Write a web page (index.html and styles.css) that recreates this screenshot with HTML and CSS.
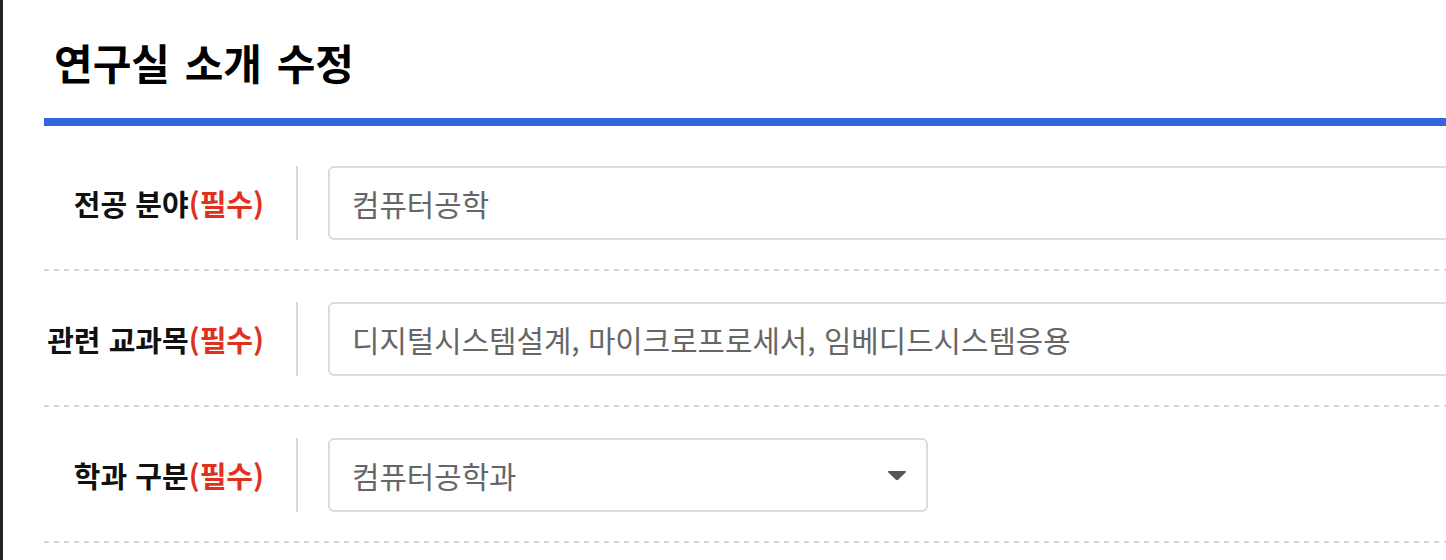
FILE: index.html
```html
<!DOCTYPE html>
<html lang="ko">
<head>
<meta charset="utf-8">
<title>연구실 소개 수정</title>
<link rel="stylesheet" href="styles.css">
</head>
<body>
<div class="side-strip"></div>
<main class="page">
  <header class="page-header">
    <h1 class="page-title">연구실 소개 수정</h1>
  </header>
  <div class="header-bar"></div>
  <form class="form">
    <div class="row">
      <div class="label">전공 분야<span class="req">(필수)</span></div>
      <div class="divider"></div>
      <div class="field">컴퓨터공학</div>
    </div>
    <div class="row">
      <div class="label">관련 교과목<span class="req">(필수)</span></div>
      <div class="divider"></div>
      <div class="field">디지털시스템설계, 마이크로프로세서, 임베디드시스템응용</div>
    </div>
    <div class="row">
      <div class="label">학과 구분<span class="req">(필수)</span></div>
      <div class="divider"></div>
      <div class="field select">
        <span>컴퓨터공학과</span>
        <svg class="caret" width="20" height="11" viewBox="0 0 20 11"><path d="M2 1 H18 Q20 1 18.6 2.6 L11.4 9.6 Q10 11 8.6 9.6 L1.4 2.6 Q0 1 2 1 Z" fill="#555"/></svg>
      </div>
    </div>
  </form>
</main>
</body>
</html>
```
FILE: styles.css
```css
html, body {
  margin: 0;
  padding: 0;
  background: #fff;
}
body {
  display: flex;
  width: 1446px;
  height: 560px;
  overflow: hidden;
  font-family: "Noto Sans CJK KR", "Noto Sans", sans-serif;
}
.side-strip {
  width: 3px;
  flex: none;
  background: #222428;
}
.page {
  flex: none;
  width: 1500px;
  padding-left: 41px;
}
.page-header {
  height: 118px;
  box-sizing: border-box;
  padding-top: 6px;
  display: flex;
  align-items: center;
}
.page-title {
  margin: 0;
  padding-left: 10px;
  font-size: 42px;
  font-weight: 700;
  color: #000;
  word-spacing: 3px;
  line-height: 1;
}
.header-bar {
  height: 8px;
  background: #3366dd;
}
.form {
  padding-top: 9px;
}
.row {
  display: flex;
  align-items: stretch;
  padding: 31px 0;
  background: linear-gradient(to right, #d6d6d6 50%, transparent 50%) left bottom / 10px 2px repeat-x;
}
.label {
  width: 220px;
  padding-right: 32px;
  text-align: right;
  display: flex;
  align-items: center;
  justify-content: flex-end;
  font-size: 29px;
  font-weight: 700;
  color: #111;
  white-space: nowrap;
}
.req {
  color: #e0301e;
}
.divider {
  width: 2px;
  background: #d9d9d9;
  margin-right: 30px;
}
.field {
  flex: 1;
  height: 74px;
  box-sizing: border-box;
  border: 2px solid #dcdcdc;
  border-radius: 6px;
  padding: 0 22px;
  display: flex;
  align-items: center;
  font-size: 29.8px;
  color: #666;
  white-space: nowrap;
}
.field.select {
  flex: none;
  width: 600px;
  justify-content: space-between;
  padding-right: 19px;
}
.caret {
  display: block;
}
```
